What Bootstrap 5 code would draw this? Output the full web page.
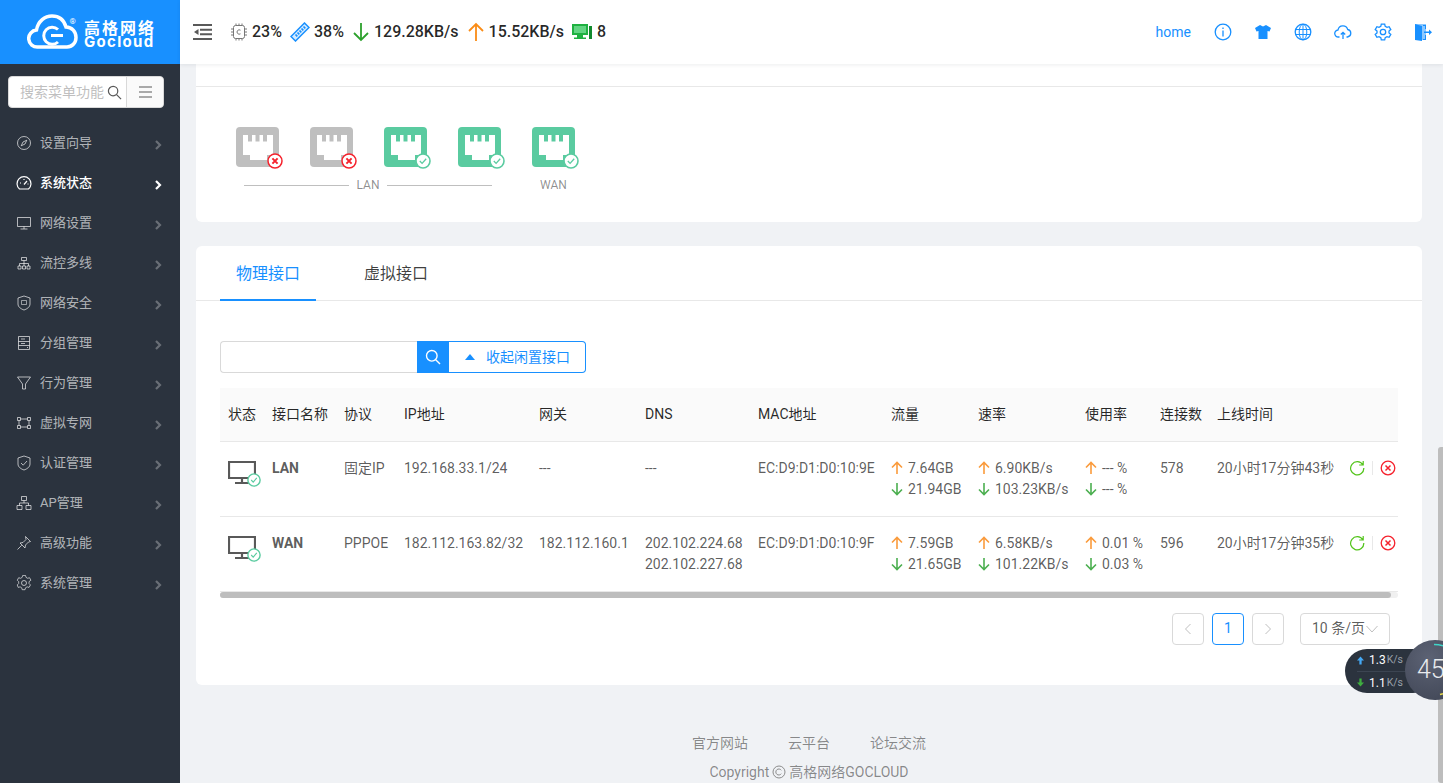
<!DOCTYPE html>
<html lang="zh-CN">
<head>
<meta charset="utf-8">
<title>Gocloud</title>
<link rel="stylesheet" href="https://cdn.jsdelivr.net/npm/bootstrap@5.3.0/dist/css/bootstrap.min.css">
<script src="https://cdn.jsdelivr.net/npm/bootstrap@5.3.0/dist/js/bootstrap.bundle.min.js"></script>
<style>
html,body{height:100%;overflow:hidden}
body{font-family:Roboto,"Noto Sans CJK SC",sans-serif;font-size:14px;color:rgba(0,0,0,.65);background:#f0f2f5}
.shell{height:783px;width:1443px;position:relative;overflow:hidden}
.side{width:180px;background:#2b333e;flex:none}
.brand{height:64px;background:#1890ff;color:#fff;gap:5px;padding-left:27px}
.brand-txt{font-weight:700;padding-top:4px}
.brand-cn{font-size:16px;line-height:16px;letter-spacing:2px;display:block;font-family:"Noto Sans CJK SC",sans-serif}
.brand-en{font-family:Inter,sans-serif;font-size:15px;line-height:14px;letter-spacing:1.3px;display:block}
.side-search{margin:12px 16px 15px 8px;height:32px;background:#fff;border-radius:4px;border:1px solid #d9d9d9}
.side-search .ph{width:84px;margin-left:11px;margin-right:3px;color:#bfbfbf;font-size:14px;white-space:nowrap;overflow:hidden;flex:none}
.side-search .ham{width:37px;height:100%;border-left:1px solid #d9d9d9;color:#595959;margin-left:auto;background:#fafafa;border-radius:0 4px 4px 0}
.mi{height:40px;color:rgba(255,255,255,.65);font-size:13px;padding:0 18px 0 16px;gap:8px}
.mi svg.ic{width:16px;height:16px;flex:none}
.mi .chev{margin-left:auto;margin-top:3px;width:8px;height:10px;opacity:.45}
.mi.on{color:#fff;font-weight:500}
.mi.on .chev{opacity:1}
.mainc{flex:1;min-width:0;position:relative}
.topb{height:64px;background:#fff;box-shadow:0 1px 4px rgba(0,21,41,.08);padding:0 0 0 13px;position:relative;z-index:2}
.menu-fold{margin-right:17px}
.stat{font-size:16px;font-weight:500;color:rgba(0,0,0,.85);margin-right:8px}
.stat svg{flex:none}
.hm{color:#1890ff;font-size:14px;margin-right:12px}
.tool{width:40px}
.tool svg{width:18px;height:18px}
.scroller{padding:0 21px 0 16px;height:719px;overflow:hidden}
.pnl{background:#fff;border-radius:6px;border:0}
.pnl-top{height:158px;margin-bottom:24px;border-radius:0 0 6px 6px}
.clip-title{height:23px;overflow:hidden;border-bottom:1px solid #e8e8e8;padding-left:24px;font-size:14px;line-height:20px}
.clip-title span{display:block;margin-top:-17px;color:rgba(0,0,0,.75)}
.ports{padding:40px 0 0 40px;gap:26px}
.port{width:48px;height:44px;position:relative}
.port-lab{color:rgba(0,0,0,.45);font-size:12px;line-height:14px;margin-top:7px}
.rule{height:1px;background:#bfbfbf}
.lan-lab{width:248px;margin-left:48px;gap:4px}
.wan-lab{margin-left:48px}
.pnl-main{height:439px}
.tabbar{height:55px;border-bottom:1px solid #e8e8e8;padding-left:24px;gap:32px}
.tabx{width:96px;text-align:center;font-size:16px;line-height:55px;height:55px;color:rgba(0,0,0,.75)}
.tabx.on{color:#1890ff;border-bottom:2px solid #1890ff}
.body-in{padding:40px 24px 0}
.srch{height:32px;width:366px;margin-bottom:15px}
.srch-in{width:197px;border:1px solid #d9d9d9;border-right:0;border-radius:4px 0 0 4px;background:#fff}
.srch-btn{width:32px;background:#1890ff;color:#fff}
.srch-tog{width:137px;border:1px solid #1890ff;border-left:0;border-radius:0 4px 4px 0;color:#1890ff;gap:11px;padding-left:16px}
.caret-up{width:0;height:0;border-left:5.5px solid transparent;border-right:5.5px solid transparent;border-bottom:6px solid #1890ff}
.tbl-wrap{overflow:hidden;position:relative}
table.ift{table-layout:fixed;width:1178px;border-collapse:collapse;margin:0}
.ift th{background:#fafafa;font-weight:400;color:rgba(0,0,0,.85);height:53px;padding:0 0 0 8px;border-bottom:1px solid #e8e8e8;white-space:nowrap}
.ift td{height:75px;padding:16px 0 0 8px;vertical-align:top;border-bottom:1px solid #e8e8e8;line-height:21px;white-space:nowrap;overflow:hidden}
.ift td .nm{font-weight:700;color:rgba(0,0,0,.65)}
.ar{width:12px;height:14px;margin-right:5px;vertical-align:-2px}
.ln2{display:block}
.st-ic{margin-top:3px}
.acts{height:21px;gap:7px;margin-left:-1px}
.acts i{display:block;width:1px;height:14px;background:#e8e8e8}
.hscroll{height:6px;background:#f0f0f0;border-radius:3px}
.hscroll i{display:block;height:100%;background:#bdbdbd;border-radius:3px}
.pager{gap:8px;padding:15px 8px 0 0}
.pg{width:32px;height:32px;border:1px solid #d9d9d9;border-radius:4px;color:#bfbfbf}
.pg.on{border-color:#1890ff;color:#1890ff}
.pg-sel{width:90px;height:32px;border:1px solid #d9d9d9;border-radius:4px;margin-left:8px;padding-left:11px;gap:1px;white-space:nowrap}
.foot{color:rgba(0,0,0,.45);padding-top:47px;text-align:center}
.foot-links{gap:40px;line-height:22px}
.foot-c{margin-top:7px;line-height:22px;gap:3px}
.vbar{position:absolute;right:0;top:447px;width:5px;height:336px;background:#bdbdbd;border-radius:3px 0 0 3px;z-index:3}
.speedw{position:absolute;left:1345px;top:649px;width:90px;height:44px;background:#2b333e;border-radius:22px;color:#fff;font-size:12px;z-index:4;padding-left:12px}
.speedw div{height:22px;line-height:22px}
.speedw div+div{border-top:1px solid #3c4552}
.speedw svg{margin-right:5px}
.speedw small{color:#9aa1ab;font-size:10.5px;margin-left:1px}
.gauge{position:absolute;left:1405px;top:640px;width:60px;height:60px;border-radius:50%;background:radial-gradient(circle at 40% 30%,#5c6274,#3d4352);color:#e9ebee;font-size:25px;font-weight:300;z-index:5;padding-left:12px;line-height:60px;overflow:hidden}
.gauge svg{position:absolute;left:0;top:0}
</style>
</head>
<body>
<svg width="0" height="0" class="position-absolute">
<defs>
<symbol id="portb" viewBox="0 0 44 42"><rect width="43" height="40" rx="4" fill="currentColor"/><path d="M7 8h5v6.500h4V8h3.500v6.500h4V8H27v6.500h4V8h6v20h-6v5H14v-5H7z" fill="#fff"/></symbol>
<symbol id="okb" viewBox="0 0 16 16"><circle cx="8" cy="8" r="7" fill="#fff" stroke="#5acba0" stroke-width="1.600"/><path d="M4.800 8l2.300 2.400L11.200 5.700" fill="none" stroke="#5acba0" stroke-width="1.300"/></symbol>
<symbol id="nob" viewBox="0 0 16 16"><circle cx="8" cy="8" r="7" fill="#fff" stroke="#f5222d" stroke-width="1.500"/><path d="M5.400 5.400l5.200 5.200M10.600 5.400l-5.200 5.200" stroke="#f5222d" stroke-width="2"/></symbol>
<symbol id="up" viewBox="0 0 12 14"><path d="M6 13V1.500M1 6.500l5-5 5 5" fill="none" stroke="#fa9b3c" stroke-width="1.600"/></symbol>
<symbol id="dn" viewBox="0 0 12 14"><path d="M6 1v11.500M1 7.500l5 5 5-5" fill="none" stroke="#4caf50" stroke-width="1.600"/></symbol>
<symbol id="chev" viewBox="0 0 8 10"><path d="M2 1l4 4-4 4" fill="none" stroke="currentColor" stroke-width="2.200"/></symbol>
<symbol id="mon" viewBox="0 0 28 24"><path d="M1 1h26v16H1zM14 17v4M7 22h14" fill="none" stroke="#595959" stroke-width="2.200"/></symbol>
<symbol id="ref" viewBox="0 0 16 16"><path d="M13.800 4.800A6.600 6.600 0 1 0 14.800 8M14.200 1v4h-4" fill="none" stroke="#52c41a" stroke-width="1.200"/></symbol>
<symbol id="cls" viewBox="0 0 16 16"><circle cx="8" cy="8" r="6.800" fill="none" stroke="#f5222d" stroke-width="1.300"/><path d="M5.500 5.500l5 5M10.500 5.500l-5 5" stroke="#f5222d" stroke-width="1.500"/></symbol>
</defs>
</svg>
<div class="shell d-flex">
 <aside class="side">
  <div class="brand d-flex align-items-center">
   <svg width="52" height="36" viewBox="0 0 52 36"><path d="M11 33A8.500 8.500 0 0 1 9.500 16C11 7 18 2 25 2c7 0 12 4 14 11 6 0 10 5 10 10.500S45 33 40 33z" fill="none" stroke="#fff" stroke-width="3.500"/><path d="M31 15.500a8.500 8.500 0 1 0 0 12.500" fill="none" stroke="#fff" stroke-width="3"/><path d="M24 21.500h12" stroke="#fff" stroke-width="3"/><text x="42.500" y="10" font-size="8" font-weight="400" fill="#fff" font-family="Roboto,sans-serif">®</text></svg>
   <span class="brand-txt"><span class="brand-cn">高格网络</span><span class="brand-en">Gocloud</span></span>
  </div>
  <div class="side-search d-flex align-items-center">
   <span class="ph">搜索菜单功能</span>
   <svg width="15" height="15" viewBox="0 0 16 16" class="flex-none"><circle cx="6.500" cy="6.500" r="5" fill="none" stroke="#595959" stroke-width="1.300"/><path d="M10.200 10.200L15 15" stroke="#595959" stroke-width="1.300"/></svg>
   <span class="ham d-flex align-items-center justify-content-center"><svg width="13" height="12" viewBox="0 0 13 12"><path d="M0 1h13M0 6h13M0 11h13" stroke="#595959"/></svg></span>
  </div>
  <nav>
   <div class="mi d-flex align-items-center"><svg class="ic" viewBox="0 0 16 16" fill="none" stroke="currentColor"><circle cx="8" cy="8" r="6.500"/><path d="M10.800 5.200L9 9 5.200 10.800 7 7z"/></svg>设置向导<svg class="chev"><use href="#chev"/></svg></div>
   <div class="mi on d-flex align-items-center"><svg class="ic" viewBox="0 0 16 16" fill="none" stroke="currentColor" stroke-width="1.200"><path d="M3.500 14A7 7 0 1 1 12.500 14z"/><path d="M8 9.500L11 6M4 8h1M8 4v1M11.500 9h1"/></svg>系统状态<svg class="chev"><use href="#chev"/></svg></div>
   <div class="mi d-flex align-items-center"><svg class="ic" viewBox="0 0 16 16" fill="none" stroke="currentColor"><path d="M1.500 2.500h13v9h-13zM8 11.500v2.500M4.500 14h7"/></svg>网络设置<svg class="chev"><use href="#chev"/></svg></div>
   <div class="mi d-flex align-items-center"><svg class="ic" viewBox="0 0 16 16" fill="none" stroke="currentColor"><path d="M5.500 2.500h5v3h-5zM2 11h3v3H2zM6.500 11h3v3h-3zM11 11h3v3h-3zM3.500 11V8.500h9V11M8 5.500V11"/></svg>流控多线<svg class="chev"><use href="#chev"/></svg></div>
   <div class="mi d-flex align-items-center"><svg class="ic" viewBox="0 0 16 16" fill="none" stroke="currentColor"><path d="M8 1l6 2v6c0 3-3 5-6 6-3-1-6-3-6-6V3z"/><path d="M5.500 5.500h5v4h-5z" stroke-width=".8"/></svg>网络安全<svg class="chev"><use href="#chev"/></svg></div>
   <div class="mi d-flex align-items-center"><svg class="ic" viewBox="0 0 16 16" fill="none" stroke="currentColor"><path d="M2.500 1.500h11v13h-11zM2.500 6.500h11M2.500 10.500h11M5 4h4M5 8.500h4M11 12.500h1"/></svg>分组管理<svg class="chev"><use href="#chev"/></svg></div>
   <div class="mi d-flex align-items-center"><svg class="ic" viewBox="0 0 16 16" fill="none" stroke="currentColor"><path d="M1.500 2h13L9.500 9v5h-3V9z"/></svg>行为管理<svg class="chev"><use href="#chev"/></svg></div>
   <div class="mi d-flex align-items-center"><svg class="ic" viewBox="0 0 16 16" fill="none" stroke="currentColor"><path d="M1.500 2.500h3v3h-3zM11.500 2.500h3v3h-3zM1.500 10.500h3v3h-3zM11.500 10.500h3v3h-3zM4.500 4h7M4.500 12h7M3 5.500v5M13 5.500v5"/></svg>虚拟专网<svg class="chev"><use href="#chev"/></svg></div>
   <div class="mi d-flex align-items-center"><svg class="ic" viewBox="0 0 16 16" fill="none" stroke="currentColor"><path d="M8 1l6 2v6c0 3-3 5-6 6-3-1-6-3-6-6V3z"/><path d="M5 8l2.200 2.200L11 6"/></svg>认证管理<svg class="chev"><use href="#chev"/></svg></div>
   <div class="mi d-flex align-items-center"><svg class="ic" viewBox="0 0 16 16" fill="none" stroke="currentColor"><path d="M5.500 1.500h5v4h-5zM1 10.500h5v4H1zM10 10.500h5v4h-5zM3.500 10.500V8h9v2.500M8 5.500V8"/></svg>AP管理<svg class="chev"><use href="#chev"/></svg></div>
   <div class="mi d-flex align-items-center"><svg class="ic" viewBox="0 0 16 16" fill="none" stroke="currentColor"><path d="M9.500 1.500l5 5-2 .5-3 3-.5 3L4 8l3-.5 3-3zM5.800 10.200L1.500 14.500"/></svg>高级功能<svg class="chev"><use href="#chev"/></svg></div>
   <div class="mi d-flex align-items-center"><svg class="ic" viewBox="0 0 16 16" fill="none" stroke="currentColor"><path d="M6.500 1h3l.5 2 1.700 1 2-.6 1.500 2.600L13.200 7.500v2l1.500 1.500-1.500 2.600-2-.6-1.700 1-.5 2h-3l-.5-2-1.700-1-2 .6L.8 11l1.500-1.500v-2L.8 6l1.500-2.600 2 .6L6 3z" transform="translate(.5 -.5) scale(.95)"/><circle cx="8" cy="8" r="2.500"/></svg>系统管理<svg class="chev"><use href="#chev"/></svg></div>
  </nav>
 </aside>
 <div class="mainc">
  <header class="topb d-flex align-items-center">
   <svg width="20" height="16" viewBox="0 0 20 16" class="menu-fold"><path d="M0 1h19M7 5.800h12M7 10.200h12M0 15h19" stroke="#595959" stroke-width="2"/><path d="M5.500 5L1 8l4.500 3z" fill="#595959"/></svg>
   <span class="stat d-flex align-items-center"><svg width="18" height="18" viewBox="0 0 18 18" fill="none" stroke="#777"><rect x="3.500" y="2.500" width="11" height="13" rx="2"/><path d="M6 .5v2M9 .5v2M12 .5v2M6 15.500v2M9 15.500v2M12 15.500v2M1 6h2.500M1 9h2.500M1 12h2.500M14.500 6h2.500M14.500 9h2.500M14.500 12h2.500"/><path d="M10.500 7.200A2.200 2.200 0 1 0 10.500 10.800"/></svg><span class="ms-1">23%</span></span>
   <span class="stat d-flex align-items-center"><svg width="20" height="20" viewBox="0 0 20 20"><path d="M14.500 1L19 5.500 5.500 19 1 14.500z" fill="#d4ebff" stroke="#1890ff" stroke-width="1.500"/><path d="M5.500 12.500l1.800 1.800M7.500 10.500l1.800 1.800M9.500 8.500l1.800 1.800M11.500 6.500l1.800 1.800M13.500 4.500l1.800 1.800" stroke="#1890ff" stroke-width="1.700"/></svg><span class="ms-1">38%</span></span>
   <span class="stat d-flex align-items-center"><svg width="18" height="20" viewBox="0 0 18 20"><path d="M9 1v17M2 11l7 7 7-7" fill="none" stroke="#2da12d" stroke-width="1.800"/></svg><span class="stat-t ms-1">129.28KB/s</span></span>
   <span class="stat d-flex align-items-center"><svg width="18" height="20" viewBox="0 0 18 20"><path d="M9 19V2M2 9l7-7 7 7" fill="none" stroke="#fa8c16" stroke-width="1.800"/></svg><span class="ms-1">15.52KB/s</span></span>
   <span class="stat d-flex align-items-center"><svg width="21" height="19" viewBox="0 0 21 19"><path d="M0 1h16v11H0z" fill="#1fb141"/><path d="M2 3h12v7H2z" fill="#63d583"/><path d="M5 12h6v2.500h3V16H2v-1.500h3z" fill="#1fb141"/><path d="M17 3h3v13h-3z" fill="#128a2e"/></svg><span class="ms-1">8</span></span>
   <span class="hm ms-auto">home</span>
   <span class="tool d-flex justify-content-center"><svg viewBox="0 0 18 18" fill="none" stroke="#1890ff" stroke-width="1.300"><circle cx="9" cy="9" r="7.800"/><path d="M9 7.500v6M9 4.500v1.500"/></svg></span>
   <span class="tool d-flex justify-content-center"><svg viewBox="0 0 18 18" fill="#1890ff"><path d="M6 2l3 1.500L12 2l5 3-1.500 3.500-2-.5v8H4.500V8l-2 .5L1 5z"/></svg></span>
   <span class="tool d-flex justify-content-center"><svg viewBox="0 0 18 18" fill="none" stroke="#1890ff"><circle cx="9" cy="9" r="7.800" stroke-width="1.300"/><ellipse cx="9" cy="9" rx="3.800" ry="7.800"/><path d="M9 1v16M1.500 6.500h15M1.500 11.500h15"/></svg></span>
   <span class="tool d-flex justify-content-center"><svg viewBox="0 0 18 18" fill="none" stroke="#1890ff" stroke-width="1.300"><path d="M5.500 14H4.500a3.500 3.500 0 0 1-.5-7 5 5 0 0 1 9.700-.5A3.800 3.800 0 0 1 13.500 14h-1M9 16V9.500M6.800 11.500L9 9.300l2.200 2.200"/></svg></span>
   <span class="tool d-flex justify-content-center"><svg viewBox="0 0 18 18" fill="none" stroke="#1890ff" stroke-width="1.300"><path d="M7.300 1.200h3.400l.5 2.100 1.800 1 2.100-.6 1.700 2.900L15 8.100v1.800l1.800 1.500-1.700 2.900-2.100-.6-1.800 1-.5 2.100H7.300l-.5-2.100-1.800-1-2.100.6-1.700-2.900L3 9.900V8.100L1.200 6.600l1.700-2.900 2.100.6 1.800-1z"/><circle cx="9" cy="9" r="2.700"/></svg></span>
   <span class="tool d-flex justify-content-center"><svg viewBox="0 0 18 18"><path d="M1 1h11v16H1z" fill="#8cc8ff"/><path d="M1 1l7 2v15l-7-1z" fill="#1890ff"/><path d="M9 2h3v4h-1V3H9zM11 12h1v5H9v-1h2z" fill="#1890ff"/><path d="M10 8.500h5V6.500l3 2.800-3 2.700v-2h-5z" fill="#1890ff"/></svg></span>
  </header>
  <div class="scroller">
   <section class="pnl pnl-top">
    <div class="clip-title"><span>网口状态</span></div>
    <div class="ports d-flex">
     <div class="port"><svg width="44" height="42" style="color:#bfbfbf"><use href="#portb"/></svg><svg class="position-absolute" width="16" height="16" style="left:31px;top:26px"><use href="#nob"/></svg></div>
     <div class="port"><svg width="44" height="42" style="color:#bfbfbf"><use href="#portb"/></svg><svg class="position-absolute" width="16" height="16" style="left:31px;top:26px"><use href="#nob"/></svg></div>
     <div class="port"><svg width="44" height="42" style="color:#5acba0"><use href="#portb"/></svg><svg class="position-absolute" width="16" height="16" style="left:31px;top:26px"><use href="#okb"/></svg></div>
     <div class="port"><svg width="44" height="42" style="color:#5acba0"><use href="#portb"/></svg><svg class="position-absolute" width="16" height="16" style="left:31px;top:26px"><use href="#okb"/></svg></div>
     <div class="port"><svg width="44" height="42" style="color:#5acba0"><use href="#portb"/></svg><svg class="position-absolute" width="16" height="16" style="left:31px;top:26px"><use href="#okb"/></svg></div>
    </div>
    <div class="d-flex align-items-center port-lab">
     <div class="lan-lab d-flex align-items-center"><span class="rule flex-fill"></span><span class="px-1">LAN</span><span class="rule flex-fill"></span></div>
     <div class="wan-lab">WAN</div>
    </div>
   </section>
   <section class="pnl pnl-main">
    <div class="tabbar d-flex">
     <div class="tabx on">物理接口</div>
     <div class="tabx">虚拟接口</div>
    </div>
    <div class="body-in">
     <div class="srch d-flex">
      <div class="srch-in"></div>
      <div class="srch-btn d-flex align-items-center justify-content-center"><svg width="16" height="16" viewBox="0 0 16 16" fill="none" stroke="#fff" stroke-width="1.400"><circle cx="6.800" cy="6.800" r="5.300"/><path d="M10.700 10.700L15 15"/></svg></div>
      <div class="srch-tog d-flex align-items-center"><span class="caret-up"></span><span>收起闲置接口</span></div>
     </div>
     <div class="tbl-wrap">
      <table class="ift">
       <colgroup><col width="44"><col width="72"><col width="60"><col width="135"><col width="106"><col width="113"><col width="133"><col width="87"><col width="107"><col width="75"><col width="57"><col width="133"><col width="56"></colgroup>
       <thead><tr><th>状态</th><th>接口名称</th><th>协议</th><th>IP地址</th><th>网关</th><th>DNS</th><th>MAC地址</th><th>流量</th><th>速率</th><th>使用率</th><th>连接数</th><th>上线时间</th><th></th></tr></thead>
       <tbody>
        <tr>
         <td><span class="st-ic d-inline-block position-relative"><svg width="28" height="24"><use href="#mon"/></svg><svg class="position-absolute" width="14" height="14" style="left:19px;top:12px"><use href="#okb"/></svg></span></td>
         <td><span class="nm">LAN</span></td><td>固定IP</td><td>192.168.33.1/24</td><td>---</td><td>---</td><td>EC:D9:D1:D0:10:9E</td>
         <td><span class="ln2"><svg class="ar"><use href="#up"/></svg>7.64GB</span><span class="ln2"><svg class="ar"><use href="#dn"/></svg>21.94GB</span></td>
         <td><span class="ln2"><svg class="ar"><use href="#up"/></svg>6.90KB/s</span><span class="ln2"><svg class="ar"><use href="#dn"/></svg>103.23KB/s</span></td>
         <td><span class="ln2"><svg class="ar"><use href="#up"/></svg>--- %</span><span class="ln2"><svg class="ar"><use href="#dn"/></svg>--- %</span></td>
         <td>578</td><td>20小时17分钟43秒</td>
         <td><span class="acts d-flex align-items-center"><svg width="16" height="16"><use href="#ref"/></svg><i></i><svg width="16" height="16"><use href="#cls"/></svg></span></td>
        </tr>
        <tr>
         <td><span class="st-ic d-inline-block position-relative"><svg width="28" height="24"><use href="#mon"/></svg><svg class="position-absolute" width="14" height="14" style="left:19px;top:12px"><use href="#okb"/></svg></span></td>
         <td><span class="nm">WAN</span></td><td>PPPOE</td><td>182.112.163.82/32</td><td>182.112.160.1</td><td><span class="ln2">202.102.224.68</span><span class="ln2">202.102.227.68</span></td><td>EC:D9:D1:D0:10:9F</td>
         <td><span class="ln2"><svg class="ar"><use href="#up"/></svg>7.59GB</span><span class="ln2"><svg class="ar"><use href="#dn"/></svg>21.65GB</span></td>
         <td><span class="ln2"><svg class="ar"><use href="#up"/></svg>6.58KB/s</span><span class="ln2"><svg class="ar"><use href="#dn"/></svg>101.22KB/s</span></td>
         <td><span class="ln2"><svg class="ar"><use href="#up"/></svg>0.01 %</span><span class="ln2"><svg class="ar"><use href="#dn"/></svg>0.03 %</span></td>
         <td>596</td><td>20小时17分钟35秒</td>
         <td><span class="acts d-flex align-items-center"><svg width="16" height="16"><use href="#ref"/></svg><i></i><svg width="16" height="16"><use href="#cls"/></svg></span></td>
        </tr>
       </tbody>
      </table>
      <div class="hscroll"><i style="width:1171px"></i></div>
     </div>
     <div class="pager d-flex justify-content-end align-items-center">
      <span class="pg d-flex align-items-center justify-content-center"><svg width="8" height="12" viewBox="0 0 8 12"><path d="M6.500 1L1.500 6l5 5" fill="none" stroke="#bfbfbf"/></svg></span>
      <span class="pg on d-flex align-items-center justify-content-center">1</span>
      <span class="pg d-flex align-items-center justify-content-center"><svg width="8" height="12" viewBox="0 0 8 12"><path d="M1.500 1l5 5-5 5" fill="none" stroke="#bfbfbf"/></svg></span>
      <span class="pg-sel d-flex align-items-center">10 条/页<svg width="12" height="8" viewBox="0 0 12 8"><path d="M.5 1L6 7l5.500-6" fill="none" stroke="#bfbfbf"/></svg></span>
     </div>
    </div>
   </section>
   <footer class="foot">
    <div class="foot-links d-flex justify-content-center"><span>官方网站</span><span>云平台</span><span>论坛交流</span></div>
    <div class="foot-c d-flex justify-content-center align-items-center">Copyright <svg width="14" height="14" viewBox="0 0 14 14" fill="none" stroke="#8c8c8c"><circle cx="7" cy="7" r="6"/><path d="M9.300 5.300a3 3 0 1 0 0 3.400"/></svg> 高格网络GOCLOUD</div>
   </footer>
  </div>
 </div>
 <div class="vbar"></div>
 <div class="speedw">
  <div class="d-flex align-items-center"><svg width="7" height="9" viewBox="0 0 8 9"><path d="M4 0l4 4.500H5.300V9H2.700V4.500H0z" fill="#45a9f5"/></svg><span>1.3</span><small>K/s</small></div>
  <div class="d-flex align-items-center"><svg width="7" height="9" viewBox="0 0 8 9"><path d="M4 9L0 4.500h2.700V0h2.600v4.500H8z" fill="#3fae3f"/></svg><span>1.1</span><small>K/s</small></div>
 </div>
 <div class="gauge">45<svg width="60" height="60" viewBox="0 0 60 60" fill="none"><path d="M29 4.500q5 0 10 1.500" stroke="#3fd6c8" stroke-width="1.500"/><path d="M35 54.500l3-.8" stroke="#e6d84a" stroke-width="1.500"/></svg></div>
</div>
</body>
</html>
